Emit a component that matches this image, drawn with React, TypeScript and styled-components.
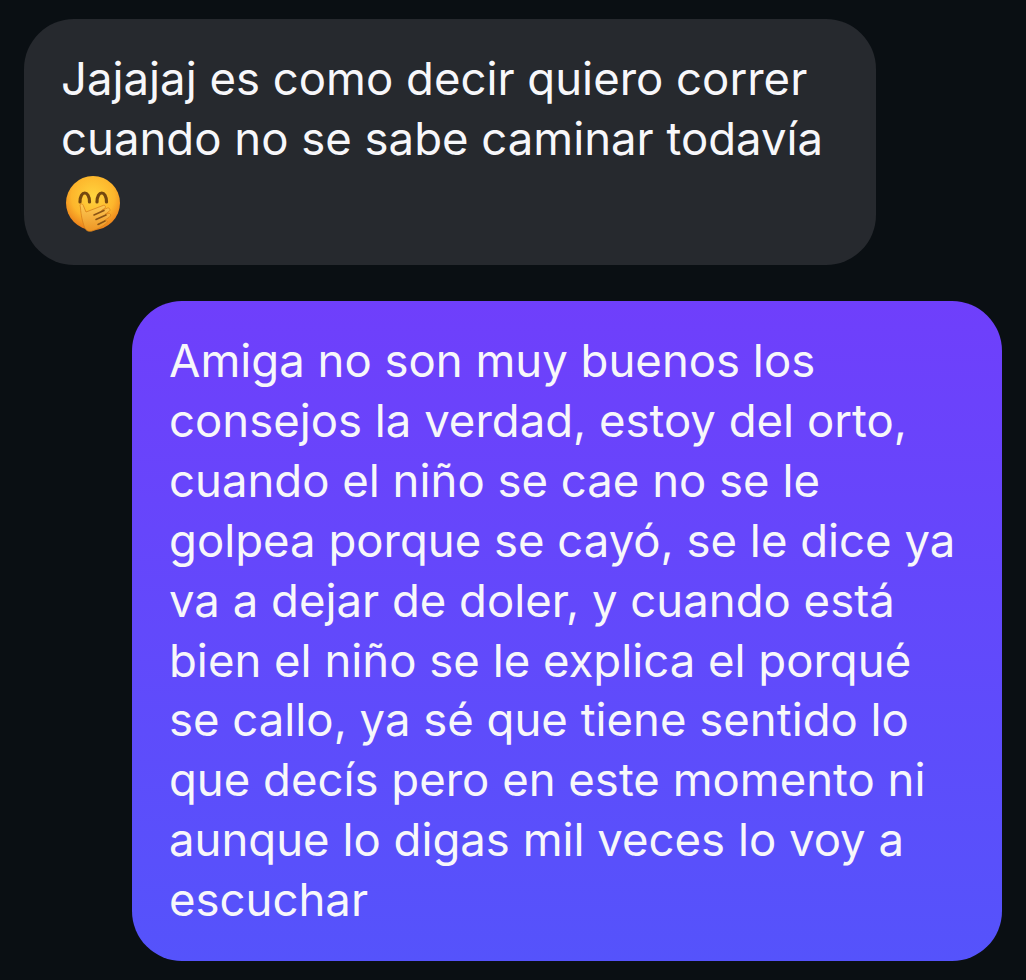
import React from "react";
import styled, { createGlobalStyle } from "styled-components";

const GlobalStyle = createGlobalStyle`
  html, body {
    margin: 0;
    padding: 0;
    background: #0a0f13;
  }
`;

const Thread = styled.div`
  width: 1026px;
  height: 980px;
  box-sizing: border-box;
  padding: 19px 24px 0;
  display: flex;
  flex-direction: column;
  gap: 36px;
  overflow: hidden;
  font-family: Inter, "Liberation Sans", sans-serif;
  font-size: 45.5px;
  line-height: 60px;
  font-weight: 400;
  color: #f7f7fa;
`;

const Received = styled.div`
  align-self: flex-start;
  width: 852px;
  height: 246px;
  box-sizing: border-box;
  padding: 30px 37px;
  border-radius: 50px;
  background: #26292e;
`;

const Sent = styled.div`
  align-self: flex-end;
  width: 870px;
  height: 660px;
  box-sizing: border-box;
  padding: 30px 37px;
  border-radius: 50px;
  background: linear-gradient(180deg, #6f3ffb 0%, #5553fb 100%);
  line-height: 59.9px;
`;

const Line = styled.div`
  white-space: nowrap;
`;

const EmojiLine = styled.div`
  height: 68px;
  display: flex;
  align-items: center;
  padding-left: 3px;
`;

const CoverMouthEmoji = () => (
  <svg width="58" height="58" viewBox="0 0 58 58">
    <defs>
      <radialGradient id="face" cx="0.5" cy="0.38" r="0.64">
        <stop offset="0" stopColor="#ffd43e" />
        <stop offset="0.62" stopColor="#fdb62c" />
        <stop offset="1" stopColor="#ea7a18" />
      </radialGradient>
      <linearGradient id="hand" x1="0" y1="0" x2="0" y2="1">
        <stop offset="0" stopColor="#fdcb55" />
        <stop offset="1" stopColor="#ee9524" />
      </linearGradient>
    </defs>
    <circle cx="29" cy="29" r="27" fill="url(#face)" />
    <path d="M16 28c0-12 9.500-12 9.500 0" fill="none" stroke="#74470f" strokeWidth="3.200" strokeLinecap="round" />
    <path d="M33 28c0-12 9.500-12 9.500 0" fill="none" stroke="#74470f" strokeWidth="3.200" strokeLinecap="round" />
    <path
      d="M16 31c1-2 3-1 3.500 1l2.500 6 17-6.500c2-1 3.500 1.500 1.500 3l-3 2 6-2.500c2-.5 3.500 2 1.500 3.500l-4 3 3.500-1c2-.5 3 2 1 3.500l-5 3.500 1.500 0c1.500 0 2 2 0 3-4 3.500-9 6-14 7.500-4 1-6.500-.5-8-5-1.500-5-3-10-3.500-18z"
      fill="url(#hand)"
      stroke="#d9801a"
      strokeWidth="0.800"
    />
    <path d="M30 41l10-4.500M32 45.500l10-4.500M34 50.500l7-3.500" fill="none" stroke="#8a5415" strokeWidth="1.600" strokeLinecap="round" />
  </svg>
);

const receivedLines = ["Jajajaj es como decir quiero correr", "cuando no se sabe caminar todavía"];

const sentLines = [
  "Amiga no son muy buenos los",
  "consejos la verdad, estoy del orto,",
  "cuando el niño se cae no se le",
  "golpea porque se cayó, se le dice ya",
  "va a dejar de doler, y cuando está",
  "bien el niño se le explica el porqué",
  "se callo, ya sé que tiene sentido lo",
  "que decís pero en este momento ni",
  "aunque lo digas mil veces lo voy a",
  "escuchar",
];

export default function App() {
  return (
    <Thread>
      <GlobalStyle />
      <Received>
        {receivedLines.map((text) => (
          <Line key={text}>{text}</Line>
        ))}
        <EmojiLine>
          <CoverMouthEmoji />
        </EmojiLine>
      </Received>
      <Sent>
        {sentLines.map((text) => (
          <Line key={text}>{text}</Line>
        ))}
      </Sent>
    </Thread>
  );
}
